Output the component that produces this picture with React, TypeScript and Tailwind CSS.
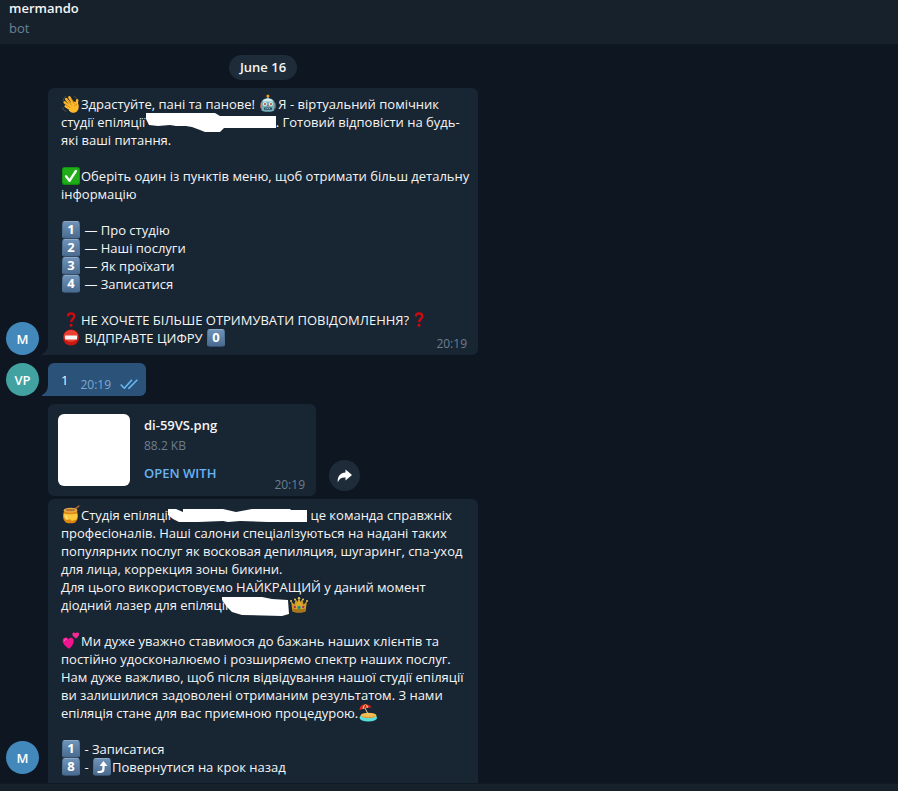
import type { ReactNode } from "react";

function Emoji({ label, children }: { label: string; children: ReactNode }) {
  return (
    <svg role="img" aria-label={label} viewBox="0 0 20 18" className="inline-block h-[18px] w-5 overflow-visible align-top">
      {children}
    </svg>
  );
}

function Wave() {
  return (
    <Emoji label="wave">
      <g stroke="#fdb92a" strokeLinecap="round" fill="none">
        <path d="M5.2 4.2 10 10" strokeWidth="2.6" />
        <path d="M8.4 2.4 12.4 9" strokeWidth="2.6" />
        <path d="M3.6 7.4 9 12" strokeWidth="2.5" />
        <path d="M4.6 11.2 9 14" strokeWidth="2.3" />
        <path d="M16.2 5.2 15.6 9.5" strokeWidth="2.5" />
      </g>
      <path d="M8 8.5 13 6.5 17 8c1.3 3 1 6.500-1.400 8.800-2.700 1.800-6.100.700-7.600-1.400z" fill="#fdb92a" />
      <path d="m6 4.800 4.600 5.400M9.700 3.600l3.600 5.200M4.500 9.300l4.600 3.200M13.400 10.800c1-.8 1.700-1.300 2.400-1.500" stroke="#c77a14" strokeWidth=".7" fill="none" strokeLinecap="round" />
      <path d="M2.200 5.600C2.400 3.700 3.300 2.400 4.600 1.600M1.700 12.600c.4 2 1.500 3.200 3.300 3.800M13 1.200c1.300.5 2.200 1.300 2.700 2.400" stroke="#56534c" strokeWidth=".9" fill="none" strokeLinecap="round" />
    </Emoji>
  );
}

function Robot() {
  return (
    <Emoji label="robot">
      <rect x="9" y="1.500" width="1.800" height="3" fill="#77909a" />
      <circle cx="9.900" cy="1" r="1.500" fill="#f49a25" />
      <rect x="2" y="8" width="16" height="5.500" rx="1.300" fill="#8b5a4b" />
      <path d="M3 8C4 4.600 7 3.200 9.900 3.200s5.900 1.400 6.900 4.800l-.5 7.200c-1.500 2-11.300 2-12.800 0z" fill="#76adba" />
      <path d="M4.500 6.500C5.500 4.500 7.500 3.600 9.900 3.600s4.400.9 5.400 2.900z" fill="#d5eef0" />
      <circle cx="6.900" cy="9" r="2.100" fill="#d7ecec" />
      <circle cx="12.900" cy="9" r="2.100" fill="#d7ecec" />
      <circle cx="6.900" cy="9" r="1.100" fill="#b8523e" />
      <circle cx="12.900" cy="9" r="1.100" fill="#b8523e" />
      <path d="m9.900 9.500 1 1.800h-2z" fill="#bd4c30" />
      <rect x="6" y="12.500" width="8" height="2.200" rx=".8" fill="#244c5a" />
      <path d="M7.500 13.500h5" stroke="#d6eef0" strokeWidth=".7" strokeDasharray="1 .7" />
    </Emoji>
  );
}

function Check() {
  return (
    <Emoji label="check">
      <rect x="1" y="0" width="18" height="18" rx="2.500" fill="#128a0e" />
      <rect x="1.700" y=".700" width="16.600" height="16" rx="2" fill="#1fae18" />
      <path d="m5 9.300 3.500 4.500L14.900 4" fill="none" stroke="#fff" strokeWidth="2.300" strokeLinecap="round" strokeLinejoin="round" />
    </Emoji>
  );
}

function Question() {
  return (
    <Emoji label="question">
      <path d="M6.800 5.400C7 3.200 8.200 2.300 10 2.300c2 0 3.300 1 3.300 2.900 0 2.500-2.900 2.900-3.200 6" fill="none" stroke="#d4080f" strokeWidth="2.300" />
      <circle cx="10" cy="14.200" r="1.500" fill="#d4080f" />
    </Emoji>
  );
}

function NoEntry() {
  return (
    <Emoji label="no entry">
      <circle cx="10" cy="8.500" r="8" fill="#c91812" />
      <ellipse cx="10" cy="7" rx="7.200" ry="6" fill="#ea4033" />
      <rect x="4" y="6.500" width="12" height="4" rx=".5" fill="#f5f5f5" />
    </Emoji>
  );
}

function Honey() {
  return (
    <Emoji label="honey">
      <path d="M10 4.500 15.500 2l2.300-2" stroke="#a66332" strokeWidth="1.600" strokeLinecap="round" fill="none" />
      <path d="M2.500 7c0-1.500 1-2.500 1.500-3h11c.7.700 1.500 1.500 1.500 3 1.300 4-.2 8-2.800 9.700-2 .8-6.500.8-8.400 0C2.700 15 1.200 11 2.500 7z" fill="#dc8712" />
      <ellipse cx="9.500" cy="4.200" rx="6.800" ry="2.500" fill="#e9ae54" />
      <ellipse cx="9.500" cy="4" rx="5" ry="1.300" fill="#b8772a" />
      <path d="M3 7.500c2.700 1 10.300 1 13 0 .6 2.700.3 4.800-1 6.500-1.500-1-2.200.7-3.700.7s-2-2.200-3.500-1.200-2.600.6-3.500-.4c-1.300-1.500-1.800-3.500-1.300-5.600z" fill="#ffc83c" />
      <path d="M5 9.500c0 1.500.3 2.600 1 3.600" stroke="#fff1a8" strokeWidth="1" fill="none" />
    </Emoji>
  );
}

function Crown() {
  return (
    <Emoji label="crown">
      <path d="m2 5 3.400 3.500L6.700 3l3.300 5 3.300-5 1.300 5.500L18 5l-1.500 10.500c-3 1.400-10 1.400-13 0z" fill="#cf9a22" />
      <path d="M10 2.500 13 9l3.500 2v2h-13v-2L7 9z" fill="#dba92c" />
      <path d="M3.500 12.300c3 1.200 10 1.200 13 0l-.3 3.200c-3 1.400-9.400 1.400-12.400 0z" fill="#a87518" />
      <g fill="#ecc95c"><circle cx="2" cy="5" r="1" /><circle cx="6" cy="3.500" r="1" /><circle cx="10" cy="2.300" r="1.200" /><circle cx="14" cy="3.500" r="1" /><circle cx="18" cy="5" r="1" /></g>
      <circle cx="10" cy="11.500" r="1.700" fill="#15946f" />
      <circle cx="5.800" cy="11" r="1.200" fill="#b42a6b" />
      <circle cx="14.200" cy="11" r="1.200" fill="#b42a6b" />
    </Emoji>
  );
}

function Hearts() {
  return (
    <Emoji label="hearts">
      <path d="M8.300 16.700C4.500 14.800 1.500 11.500 1.700 8.300 2 5 6 4.500 7.400 7.200 9.500 4.500 13 5.800 12.700 9.200c-.3 3-2.300 5.500-4.400 7.500z" fill="#f2148f" />
      <path d="M15 6.500c-2-1-3.700-2.400-3.700-4.400C11.400.2 13.600-.2 14.500 1.300c1.200-1.500 3.700-1.100 3.600.9-.1 1.700-1.600 3.200-3.100 4.300z" fill="#f22a93" />
      <path d="M3.500 8.500c.2-1 .8-1.500 1.700-1.500" stroke="#ff83c3" strokeWidth="1" fill="none" strokeLinecap="round" />
    </Emoji>
  );
}

function Beach() {
  return (
    <Emoji label="beach">
      <ellipse cx="10.300" cy="13.700" rx="8.800" ry="3.800" fill="#54dfdf" />
      <ellipse cx="10.500" cy="11.500" rx="8" ry="2.800" fill="#f2bb4e" />
      <path d="M4 12.500c3 1.300 9 1.600 13 0" stroke="#cc8b2b" strokeWidth=".8" fill="none" />
      <path d="m7 4 3.500 7" stroke="#ddd1b2" strokeWidth="1" />
      <path d="M1.700 6.200C1.300 2.700 4-.3 8 .2c3 .3 5 1.800 5.700 3.500-3.300-.7-7.600.2-12 2.500z" fill="#db2325" />
      <path d="M4.500 4.900C4.700 2.700 5.700 1 7.200.2 9 .8 10 2 10.400 3.500c-2 .1-4 .6-5.900 1.400z" fill="#ffe06a" />
      <path d="M6 4.300C6.100 2.500 6.600 1 7.200.2 8.300 1.200 8.800 2.400 8.900 3.600z" fill="#db2325" />
    </Emoji>
  );
}

function Key({ children }: { children: ReactNode }) {
  return (
    <span className="mx-px inline-flex h-[18px] w-[18px] items-center justify-center rounded-[3px] border border-t-[#8ba8c6] border-x-[#50718f] border-b-[#344e6b] bg-linear-to-b from-[#6f92b8] to-[#4a6b90] pb-px align-top text-[13px] leading-none font-bold text-white">
      {children}
    </span>
  );
}

function Smear({ width, points }: { width: string; points: string }) {
  return (
    <svg aria-hidden="true" className={`inline-block h-[18px] overflow-visible align-top ${width}`}>
      <polygon points={points} fill="#fff" />
    </svg>
  );
}

function Row({ children }: { children?: ReactNode }) {
  return <p className="min-h-[18px] whitespace-nowrap">{children}</p>;
}

function Avatar({ color, children }: { color: string; children: ReactNode }) {
  return (
    <div className={`flex size-[33px] shrink-0 items-center justify-center rounded-full text-[13px] font-semibold text-white ${color}`}>
      {children}
    </div>
  );
}

function Tail({ color }: { color: string }) {
  return (
    <svg aria-hidden="true" viewBox="0 0 6 10" className={`ml-[3px] h-2.5 w-1.5 shrink-0 ${color}`}>
      <path d="M6 0v10H0V9c3.500-1.500 5.500-4.500 6-9z" fill="currentColor" />
    </svg>
  );
}

export default function App() {
  return (
    <div className="flex h-screen flex-col overflow-hidden bg-[#0e1621] font-['Open_Sans','Noto_Sans',sans-serif] text-[13px] leading-[18px] text-[#f5f5f5]">
      <header className="flex h-[45px] shrink-0 flex-col gap-1 border-b border-[#101a24] bg-[#17212b] px-[9px] leading-4">
        <h1 className="font-semibold">mermando</h1>
        <p className="text-[#6d8295]">bot</p>
      </header>

      <main className="min-h-0 flex-1 overflow-hidden px-1.5 pt-2.5">
        <div className="flex max-w-[472px] flex-col gap-2">
          <div className="ml-[42px] flex justify-center">
            <time className="flex h-[25px] items-center rounded-full bg-[#1e2c3a] px-[11px] pb-0.5 font-semibold">June 16</time>
          </div>

          <article className="flex items-end">
            <Avatar color="bg-[#4388bb]">M</Avatar>
            <Tail color="text-[#182533]" />
            <div className="relative min-w-0 flex-1 rounded-md rounded-bl-none bg-[#182533] px-[13px] pt-[7px] pb-2">
              <Row><Wave />Здрастуйте, пані та панове! <Robot />Я - віртуальний помічник</Row>
              <Row>
                студії епіляції{" "}
                <Smear width="w-[127px]" points="-3,0 66,0 71,3 127,3 127,15 75,15 71,19 56,19 51,17 43,14 37,13 27,13 21,12 9,13 0,12 -3,6" />
                . Готовий відповісти на будь-
              </Row>
              <Row>які ваші питання.</Row>
              <Row />
              <Row><Check />Оберіть один із пунктів меню, щоб отримати більш детальну</Row>
              <Row>інформацію</Row>
              <Row />
              <Row><Key>1</Key> — Про студію</Row>
              <Row><Key>2</Key> — Наші послуги</Row>
              <Row><Key>3</Key> — Як проїхати</Row>
              <Row><Key>4</Key> — Записатися</Row>
              <Row />
              <Row><Question />НЕ ХОЧЕТЕ БІЛЬШЕ ОТРИМУВАТИ ПОВІДОМЛЕННЯ?<Question /></Row>
              <Row><NoEntry /> ВІДПРАВТЕ ЦИФРУ <Key>0</Key></Row>
              <time className="absolute right-[11px] bottom-0.5 text-xs leading-[18px] text-[#6d7f8f]">20:19</time>
            </div>
          </article>

          <article className="flex items-end">
            <Avatar color="bg-[#42a2a2]">VP</Avatar>
            <Tail color="text-[#2b5278]" />
            <div className="flex h-[33px] items-end rounded-md rounded-bl-none bg-[#2b5278] pr-2 pb-0.5 pl-[13px]">
              <p className="mb-[5px]">1</p>
              <time className="ml-3 text-xs leading-[18px] text-[#7da8d3]">20:19</time>
              <svg role="img" aria-label="Read" viewBox="0 0 18 10" className="mb-[5px] ml-[9px] h-2.5 w-[18px]" fill="none" stroke="#6ab7f5" strokeWidth="1.600">
                <path d="m.7 5.500 3.600 3.700L12 .7M8.300 8.800l.6.500L17.300.7" />
              </svg>
            </div>
          </article>

          <div className="flex items-end">
            <div className="sticky bottom-[9px]">
              <Avatar color="bg-[#4388bb]">M</Avatar>
            </div>
            <div className="ml-[9px] flex min-w-0 flex-1 flex-col gap-[3px]">
              <article className="flex items-end gap-[13px]">
                <div className="relative flex w-[268px] gap-3.5 rounded-md bg-[#182533] p-2.5">
                  <div className="size-[72px] rounded-md bg-white" />
                  <div className="flex flex-col items-start pt-0.5">
                    <h2 className="font-semibold">di-59VS.png</h2>
                    <p className="mt-[3px] text-xs leading-[18px] text-[#6d7f8f]">88.2 KB</p>
                    <button type="button" className="mt-[9px] font-semibold text-[#6ab3f3]">OPEN WITH</button>
                  </div>
                  <time className="absolute right-[11px] bottom-0.5 text-xs leading-[18px] text-[#6d7f8f]">20:19</time>
                </div>
                <button type="button" aria-label="Forward" className="mb-[5px] flex size-[31px] items-center justify-center rounded-full bg-[#1e2c3a]">
                  <svg viewBox="0 0 15 14" className="h-3.5 w-[15px]" fill="#fff">
                    <path d="M8.500.5 15 6l-6.500 5.500V8.600C4.800 8.300 2.600 9.500.8 13.300.2 7.500 3.300 3.800 8.500 3.500z" />
                  </svg>
                </button>
              </article>

              <article className="rounded-t-md bg-[#182533] px-[13px] pt-[7px] pb-6">
                <Row>
                  <Honey />Студія епіляції
                  <Smear width="w-[136px]" points="-3,3 5,3 12,6 12,3 52,3 65,6 81,3 119,3 120,4 136,4 136,16 97,16 69,15 57,16 52,15 27,16 8,16 2,13 -3,9" />
                  {" "}це команда справжніх
                </Row>
                <Row>професіоналів. Наші салони спеціалізуються на надані таких</Row>
                <Row>популярних послуг як восковая депиляция, шугаринг, спа-уход</Row>
                <Row>для лица, коррекция зоны бикини.</Row>
                <Row>Для цього використовуємо НАЙКРАЩИЙ у даний момент</Row>
                <Row>
                  діодний лазер для епіляції
                  <Smear width="w-[61px]" points="-6,1 34,1 44,3 60,4 61,18 54,20 14,19 4,16 -1,11 -6,4" />
                  <Crown />
                </Row>
                <Row />
                <Row><Hearts />Ми дуже уважно ставимося до бажань наших клієнтів та</Row>
                <Row>постійно удосконалюємо і розширяємо спектр наших послуг.</Row>
                <Row>Нам дуже важливо, щоб після відвідування нашої студії епіляції</Row>
                <Row>ви залишилися задоволені отриманим результатом. З нами</Row>
                <Row>епіляція стане для вас приємною процедурою.<Beach /></Row>
                <Row />
                <Row><Key>1</Key> - Записатися</Row>
                <Row>
                  <Key>8</Key> -{" "}
                  <Key>
                    <svg role="img" aria-label="Arrow up" viewBox="0 0 14 14" className="size-3.5" fill="none">
                      <path d="M2.500 12H5c2.500 0 3.500-1.500 3.500-3.500V5" stroke="#fff" strokeWidth="2.200" />
                      <path d="M8.500 1 12.500 6h-8z" fill="#fff" />
                    </svg>
                  </Key>
                  Повернутися на крок назад
                </Row>
              </article>
            </div>
          </div>
        </div>
      </main>

      <footer className="h-2 shrink-0 border-t border-[#101a24] bg-[#17212b]" />
    </div>
  );
}
